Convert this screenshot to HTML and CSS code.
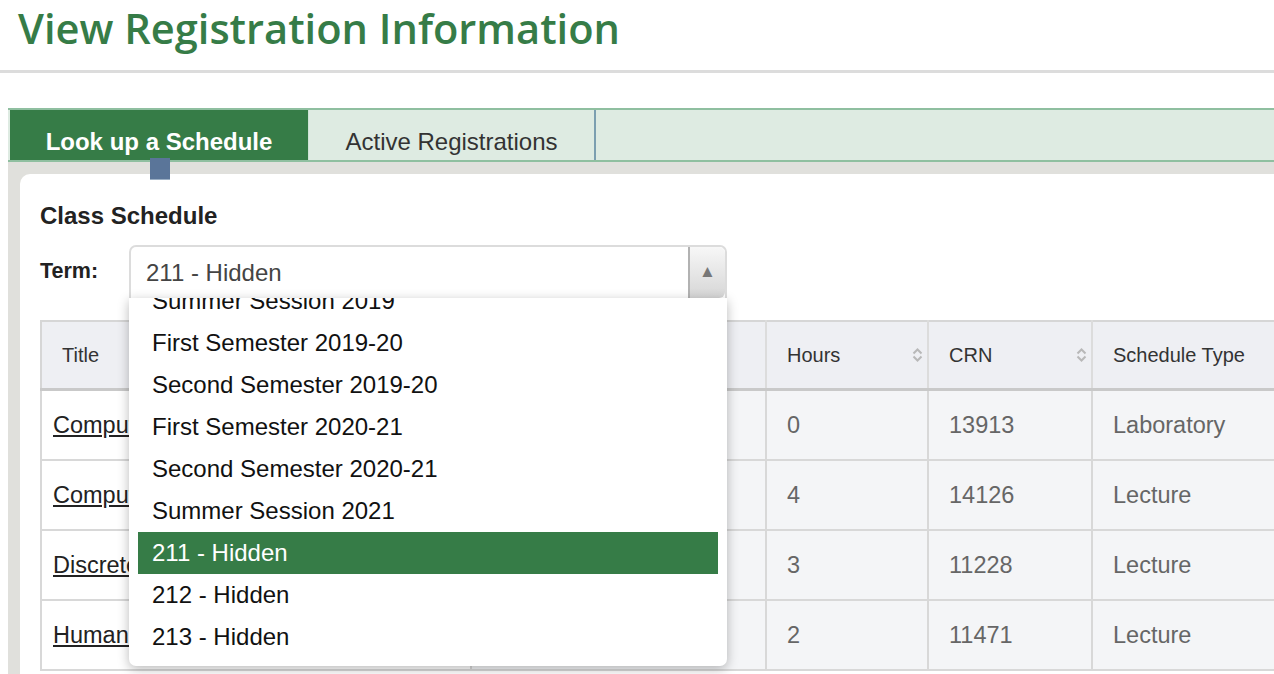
FILE: index.html
```html
<!DOCTYPE html>
<html lang="en">
<head>
<meta charset="utf-8">
<title>View Registration Information</title>
<link rel="stylesheet" href="styles.css">
</head>
<body>
<div class="page">
  <header class="page-header">
    <h1>View Registration Information</h1>
  </header>
  <div class="main">
    <nav class="tabs">
      <div class="tab active">Look up a Schedule<span class="tab-marker"></span></div>
      <div class="tab">Active Registrations</div>
      <div class="tab-fill"></div>
    </nav>
    <div class="tab-body">
      <section class="panel">
        <h2 class="panel-title">Class Schedule</h2>
        <div class="term-row">
          <label class="term-label">Term:</label>
          <div class="select-wrap">
            <div class="select">
              <span class="select-value">211 - Hidden</span>
              <span class="select-btn">&#9650;</span>
            </div>
            <div class="dropdown">
              <ul class="options">
                <li>Summer Session 2019</li>
                <li>First Semester 2019-20</li>
                <li>Second Semester 2019-20</li>
                <li>First Semester 2020-21</li>
                <li>Second Semester 2020-21</li>
                <li>Summer Session 2021</li>
                <li class="selected">211 - Hidden</li>
                <li>212 - Hidden</li>
                <li>213 - Hidden</li>
              </ul>
            </div>
          </div>
        </div>
        <table class="schedule">
          <colgroup>
            <col class="c-title"><col class="c-details"><col class="c-hours"><col class="c-crn"><col class="c-type"><col class="c-grade">
          </colgroup>
          <thead>
            <tr>
              <th class="title-cell">Title</th>
              <th>Details</th>
              <th><span class="th-inner">Hours<svg class="sort" viewBox="0 0 11 14" width="11" height="14"><path d="M1.5 5.5 L5.5 1.5 L9.5 5.5 M1.5 8.5 L5.5 12.5 L9.5 8.5" fill="none" stroke="#b8b8b8" stroke-width="2"/></svg></span></th>
              <th><span class="th-inner">CRN<svg class="sort" viewBox="0 0 11 14" width="11" height="14"><path d="M1.5 5.5 L5.5 1.5 L9.5 5.5 M1.5 8.5 L5.5 12.5 L9.5 8.5" fill="none" stroke="#b8b8b8" stroke-width="2"/></svg></span></th>
              <th>Schedule Type</th>
              <th>Grade Mode</th>
            </tr>
          </thead>
          <tbody>
            <tr>
              <td class="title-cell"><a href="#">Computer Science II Lab</a></td>
              <td>CS 2211, 101</td>
              <td>0</td><td>13913</td><td>Laboratory</td><td>Standard Letter</td>
            </tr>
            <tr>
              <td class="title-cell"><a href="#">Computer Science II</a></td>
              <td>CS 2210, 001</td>
              <td>4</td><td>14126</td><td>Lecture</td><td>Standard Letter</td>
            </tr>
            <tr>
              <td class="title-cell"><a href="#">Discrete Structures</a></td>
              <td>MATH 2300, 002</td>
              <td>3</td><td>11228</td><td>Lecture</td><td>Standard Letter</td>
            </tr>
            <tr>
              <td class="title-cell"><a href="#">Human Computer Interaction</a></td>
              <td>CS 3400, 001</td>
              <td>2</td><td>11471</td><td>Lecture</td><td>Standard Letter</td>
            </tr>
          </tbody>
        </table>
      </section>
    </div>
  </div>
</div>
</body>
</html>
```
FILE: styles.css
```css
html, body {
  margin: 0;
  padding: 0;
  background: #ffffff;
}

body {
  font-family: "Liberation Sans", Arial, Helvetica, sans-serif;
  color: #333333;
}

.page {
  width: 1274px;
  height: 674px;
  overflow: hidden;
}

.page-header {
  height: 70px;
  border-bottom: 3px solid #dcdcdc;
}

.page-header h1 {
  margin: 0;
  padding-left: 18px;
  font-family: "Open Sans", sans-serif;
  font-weight: 600;
  font-size: 41.6px;
  line-height: 56px;
  color: #367c47;
  letter-spacing: 0;
}

.main {
  margin-top: 35px;
  margin-left: 8px;
  width: 1600px;
}

.tabs {
  display: flex;
  height: 50px;
  padding-left: 2px;
  border-top: 2px solid #8fbfa0;
  border-bottom: 2px solid #8fbfa0;
  background: #deebe2;
}

.tab {
  position: relative;
  box-sizing: border-box;
  height: 50px;
  padding-top: 18px;
  font-size: 24px;
  line-height: 28px;
  text-align: center;
  color: #333333;
}

.tab.active {
  width: 299px;
  background: #367c47;
  color: #ffffff;
  font-weight: bold;
  border-right: 1px solid #cfe2d5;
}

.tab:nth-child(2) {
  width: 287px;
  border-right: 2px solid #7c9fb0;
}

.tab-fill {
  flex: 1;
}

.tab-marker {
  position: absolute;
  left: 140px;
  top: 48px;
  width: 20px;
  height: 21px;
  background: #5a7599;
  border-bottom: 1px solid #9aaec4;
  z-index: 2;
}

.tab-body {
  background: #e0e0dc;
  padding: 12px 0 0 12px;
}

.panel {
  background: #ffffff;
  border-top-left-radius: 10px;
  padding: 28px 0 0 20px;
  height: 520px;
}

.panel-title {
  margin: 0;
  font-size: 24px;
  line-height: 28px;
  font-weight: bold;
  color: #222222;
}

.term-row {
  display: flex;
  align-items: center;
  margin-top: 15px;
}

.term-label {
  width: 89px;
  font-size: 21.5px;
  font-weight: bold;
  color: #222222;
}

.select-wrap {
  position: relative;
  width: 598px;
}

.select {
  box-sizing: border-box;
  display: flex;
  align-items: stretch;
  height: 53px;
  border: 2px solid #dcdcdc;
  border-bottom: none;
  border-radius: 7px 7px 0 0;
  background: #ffffff;
}

.select-value {
  flex: 1;
  padding-left: 15px;
  font-size: 24px;
  line-height: 51px;
  color: #444444;
}

.select-btn {
  width: 35px;
  border-left: 2px solid #b2b2b2;
  border-top-right-radius: 6px;
  border-bottom-right-radius: 6px;
  background: linear-gradient(#f7f7f7, #d6d6d6);
  color: #777777;
  font-size: 17px;
  line-height: 49px;
  text-align: center;
}

.dropdown {
  position: absolute;
  left: 0;
  top: 53px;
  width: 598px;
  height: 368px;
  box-sizing: border-box;
  overflow: hidden;
  background: #ffffff;
  border-radius: 0 0 7px 7px;
  box-shadow: 0 3px 12px rgba(0, 0, 0, 0.28);
  z-index: 5;
}

.options {
  list-style: none;
  margin: -18px 0 0 0;
  padding: 0 9px;
}

.options li {
  height: 42px;
  padding-left: 14px;
  font-size: 24px;
  line-height: 42px;
  color: #111111;
  white-space: nowrap;
}

.options li.selected {
  background: #367c47;
  color: #ffffff;
}

.schedule {
  margin-top: 22px;
  border-collapse: collapse;
  table-layout: fixed;
  width: 1450px;
}

.c-title { width: 430px; }
.c-details { width: 295px; }
.c-hours { width: 162px; }
.c-crn { width: 164px; }
.c-type { width: 200px; }
.c-grade { width: 199px; }

.schedule th {
  height: 66px;
  padding: 0 0 0 20px;
  text-align: left;
  font-weight: normal;
  font-size: 20px;
  color: #333333;
  background: #eeeff3;
  border-top: 2px solid #d6d6d6;
  border-bottom: 3px solid #c9c9c9;
  border-left: 2px solid #dcdcdc;
  border-right: 2px solid #dcdcdc;
  white-space: nowrap;
}

.schedule th.title-cell {
  border-left: 2px solid #d6d6d6;
}

.th-inner {
  display: flex;
  align-items: center;
  justify-content: space-between;
  padding-right: 4px;
}

.sort {
  display: block;
}

.schedule td {
  height: 68px;
  padding: 0 0 0 20px;
  font-size: 23.5px;
  color: #666666;
  background: #f4f5f7;
  border: 2px solid #d8d8d8;
  white-space: nowrap;
  overflow: hidden;
}

.schedule td.title-cell {
  background: #ffffff;
  padding-left: 11px;
}

.schedule td.title-cell a {
  color: #222222;
  text-decoration: underline;
}
```
